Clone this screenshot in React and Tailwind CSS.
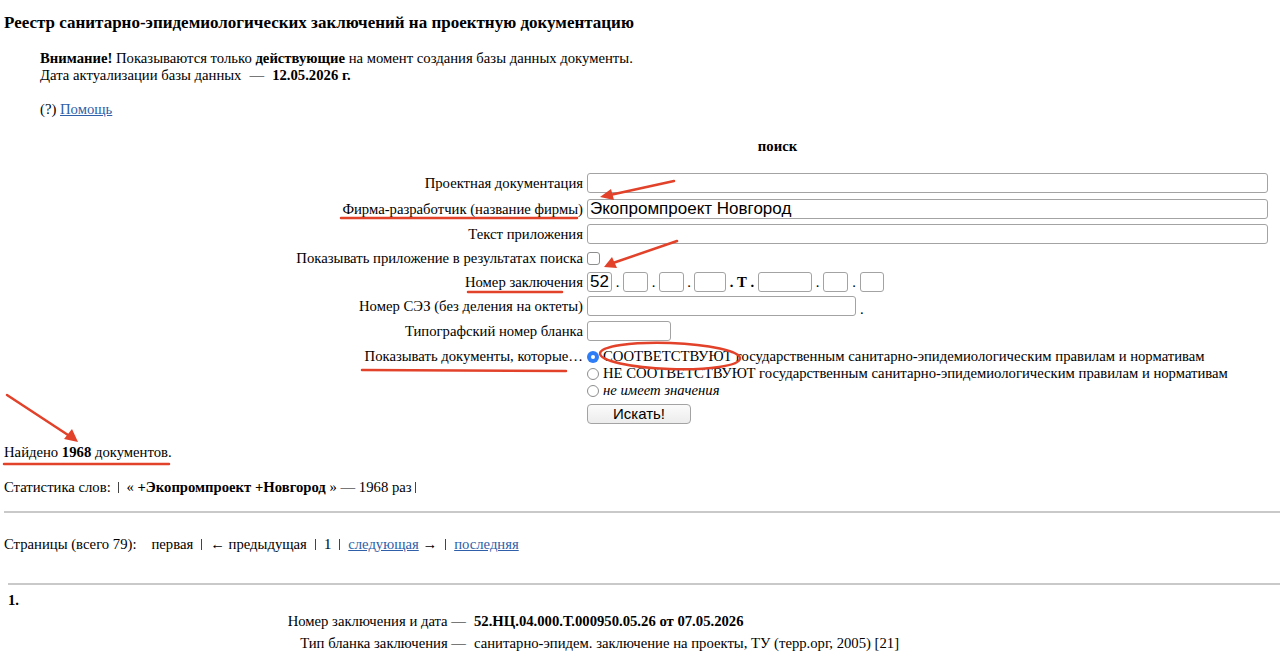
const inp = "block h-[20px] border border-[#a3a3a3] rounded-[3px] bg-white px-[2px] font-['Liberation_Sans',Arial,sans-serif] text-[17px] leading-[18px] text-black outline-none";

function Row({ label, h, children, top = false }) {
  return (
    <div className={"grid grid-cols-[298px_1fr] " + h}>
      <div className={"flex justify-end pr-[2px] text-right " + (top ? "items-start pt-[4px]" : "items-center")}>
        <span>{label}</span>
      </div>
      <div className={"flex " + (top ? "items-start" : "items-center")}>{children}</div>
    </div>
  );
}

function Dot({ w }) {
  return <span className={"text-center " + w}>.</span>;
}

function Bar() {
  return <span className="mx-[8px] inline-block w-[1px] h-[11px] bg-[#444] align-middle"></span>;
}

function Radio({ checked }) {
  return checked ? (
    <span className="ml-[2px] mr-[4px] inline-flex w-[12px] h-[12px] rounded-full bg-[#2f7df6] items-center justify-center">
      <span className="w-[4px] h-[4px] rounded-full bg-white"></span>
    </span>
  ) : (
    <span className="ml-[2px] mr-[4px] inline-block w-[12px] h-[12px] rounded-full border border-[#8d8d8d] bg-white"></span>
  );
}

export default function App() {
  return (
    <div className="relative w-[1280px] h-[659px] overflow-hidden bg-white text-black font-['Liberation_Serif','Times_New_Roman',serif] text-[14.7px] leading-[17px]">
      <div className="pl-[4px] pt-[12px]">
        <h1 className="text-[17px] leading-[21px] font-bold">
          Реестр санитарно-эпидемиологических заключений на проектную документацию
        </h1>
        <div className="mt-[17px] pl-[36px]">
          <div>
            <b>Внимание!</b> Показываются только <b>действующие</b> на момент создания базы данных документы.
          </div>
          <div>
            Дата актуализации базы данных<span className="mx-[8px]">—</span><b>12.05.2026 г.</b>
          </div>
          <div className="mt-[17px]">
            (?) <a href="#" className="text-[#2f5fa8] underline">Помощь</a>
          </div>
        </div>

        <div className="ml-[283px] w-[981px]">
          <div className="mt-[20px] text-center font-bold">поиск</div>
          <div className="mt-[15px]">
            <Row label="Проектная документация" h="h-[26px]">
              <input className={inp + " ml-[2px] w-[681px]"} defaultValue="" />
            </Row>
            <Row label="Фирма-разработчик (название фирмы)" h="h-[26px]">
              <input className={inp + " ml-[2px] w-[681px]"} defaultValue="Экопромпроект Новгород" />
            </Row>
            <Row label="Текст приложения" h="h-[24px]">
              <input className={inp + " ml-[2px] w-[681px]"} defaultValue="" />
            </Row>
            <Row label="Показывать приложение в результатах поиска" h="h-[24px]">
              <span className="ml-[2px] inline-block w-[13px] h-[13px] border border-[#8d8d8d] rounded-[3px] bg-white"></span>
            </Row>
            <Row label="Номер заключения" h="h-[24px]">
              <input className={inp + " ml-[2px] w-[25px]"} defaultValue="52" />
              <Dot w="w-[11px]" />
              <input className={inp + " w-[25px]"} defaultValue="" />
              <Dot w="w-[11px]" />
              <input className={inp + " w-[25px]"} defaultValue="" />
              <Dot w="w-[10px]" />
              <input className={inp + " w-[32px]"} defaultValue="" />
              <span className="w-[32px] text-center font-bold">. Т .</span>
              <input className={inp + " w-[54px]"} defaultValue="" />
              <Dot w="w-[11px]" />
              <input className={inp + " w-[25px]"} defaultValue="" />
              <Dot w="w-[12px]" />
              <input className={inp + " w-[24px]"} defaultValue="" />
            </Row>
            <Row label="Номер СЭЗ (без деления на октеты)" h="h-[24px]">
              <input className={inp + " ml-[2px] w-[269px]"} defaultValue="" />
              <span className="ml-[4px] mt-[6px]">.</span>
            </Row>
            <Row label="Типографский номер бланка" h="h-[26px]">
              <input className={inp + " ml-[2px] w-[84px]"} defaultValue="" />
            </Row>
            <Row label="Показывать документы, которые…" h="" top>
              <div className="pt-[4px]">
                <div className="flex items-center h-[17px]">
                  <Radio checked />
                  <span>СООТВЕТСТВУЮТ государственным санитарно-эпидемиологическим правилам и нормативам</span>
                </div>
                <div className="flex items-center h-[17px]">
                  <Radio />
                  <span>НЕ СООТВЕТСТВУЮТ государственным санитарно-эпидемиологическим правилам и нормативам</span>
                </div>
                <div className="flex items-center h-[17px]">
                  <Radio />
                  <span className="italic">не имеет значения</span>
                </div>
              </div>
            </Row>
            <div className="grid grid-cols-[298px_1fr] pt-[5px] pb-[2px]">
              <div></div>
              <div>
                <button className="ml-[2px] w-[104px] h-[20px] border border-[#a3a3a3] rounded-[4px] bg-gradient-to-b from-[#fbfbfb] to-[#ececec] font-['Liberation_Sans',Arial,sans-serif] text-[15px] leading-[18px] text-black">
                  Искать!
                </button>
              </div>
            </div>
          </div>
        </div>

        <div className="mt-[18px]">
          Найдено <b>1968</b> документов.
        </div>
        <div className="mt-[18px] flex items-center whitespace-pre">
          <span>Статистика слов:  </span>
          <span className="inline-block w-[1px] h-[11px] bg-[#444]"></span>
          <span>  « <b>+Экопромпроект +Новгород</b> » — 1968 раз </span>
          <span className="inline-block w-[1px] h-[11px] bg-[#444]"></span>
        </div>
        <div className="mt-[15px] h-[2px] bg-[#c9c9c9]"></div>
        <div className="mt-[23px] flex items-center whitespace-pre">
          <span>Страницы (всего 79):</span>
          <span className="ml-[15px]">первая</span>
          <Bar />
          <span>← предыдущая</span>
          <Bar />
          <span>1</span>
          <Bar />
          <a href="#" className="text-[#2f5fa8] underline">следующая</a>
          <span> →</span>
          <Bar />
          <a href="#" className="text-[#2f5fa8] underline">последняя</a>
        </div>
        <div className="mt-[30px] ml-[4px] h-[2px] bg-[#c9c9c9]"></div>
        <div className="mt-[7px] ml-[4px] font-bold">1.</div>
        <div className="mt-[1px] grid grid-cols-[462px_1fr]">
          <div className="h-[22px] flex items-center justify-end">Номер заключения и дата —</div>
          <div className="h-[22px] flex items-center pl-[8px] font-bold">52.НЦ.04.000.Т.000950.05.26 от 07.05.2026</div>
          <div className="h-[22px] flex items-center justify-end">Тип бланка заключения —</div>
          <div className="h-[22px] flex items-center pl-[8px]">санитарно-эпидем. заключение на проекты, ТУ (терр.орг, 2005) [21]</div>
        </div>
      </div>

      <svg className="absolute inset-0 pointer-events-none" width="1280" height="659" viewBox="0 0 1280 659">
        <g stroke="#e2412a" strokeWidth="2.5" strokeLinecap="round" fill="none">
          <line x1="341" y1="218" x2="577" y2="218" />
          <line x1="468" y1="292" x2="562" y2="292" />
          <line x1="362" y1="370" x2="566" y2="371" />
          <line x1="4" y1="464" x2="169" y2="464" />
          <line x1="674" y1="181" x2="610" y2="195" />
          <line x1="677" y1="241" x2="613" y2="263" />
          <line x1="7" y1="395" x2="68" y2="435" />
          <ellipse cx="670" cy="356" rx="70" ry="13" transform="rotate(2 670 356)" />
        </g>
        <g fill="#e2412a">
          <polygon points="600,197 611,189 614,200" />
          <polygon points="604,267 612,257 617,268" />
          <polygon points="78,442 64,439 72,429" />
        </g>
      </svg>
    </div>
  );
}
